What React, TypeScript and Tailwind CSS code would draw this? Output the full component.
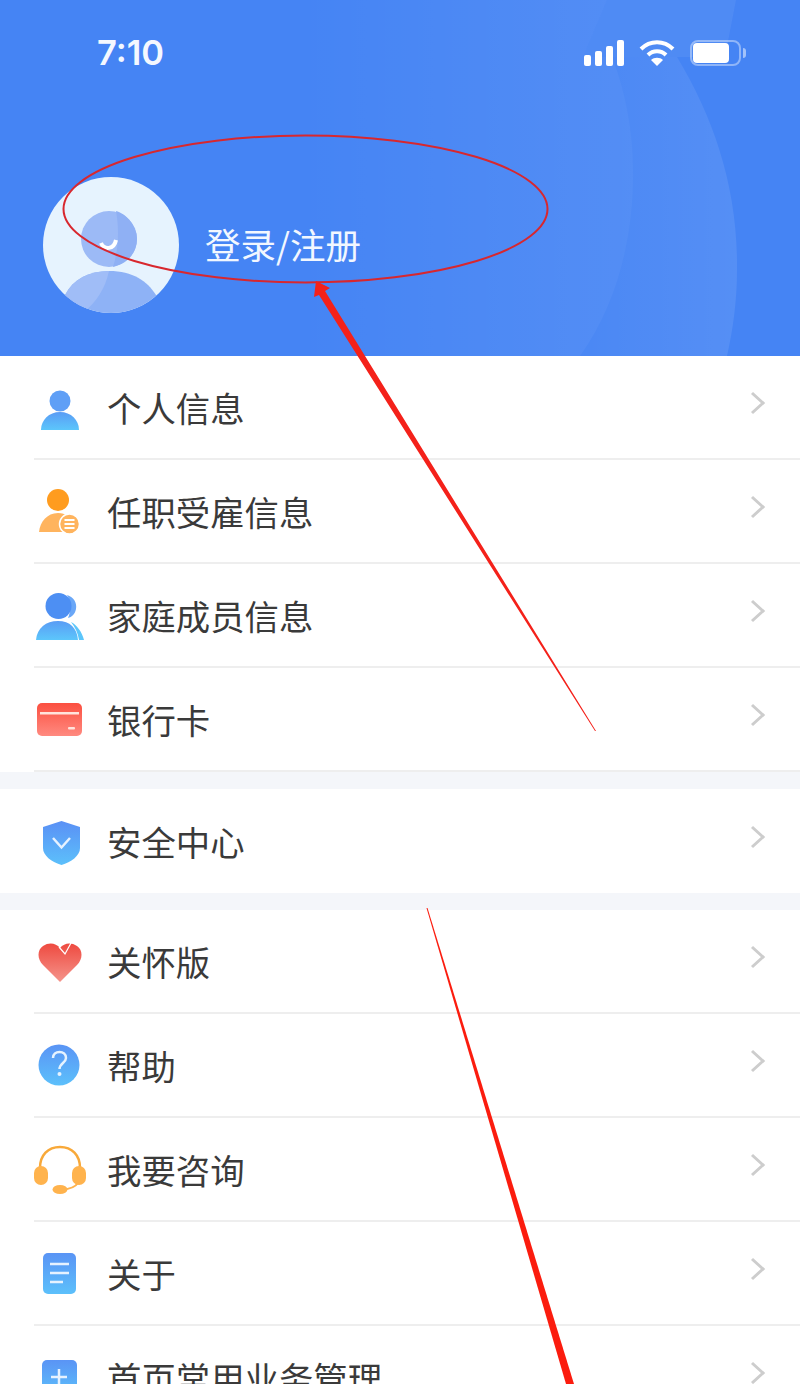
const cjk = "font-['Noto_Sans_CJK_SC','Noto_Sans',sans-serif]";

const PersonIcon = () => (
	<svg width="50" height="50" viewBox="0 0 50 50">
		<defs>
			<linearGradient id="p1" x1="0" y1="0" x2="0" y2="1">
				<stop offset="0" stopColor="#5a9cf5" />
				<stop offset="1" stopColor="#5cc6fb" />
			</linearGradient>
		</defs>
		<circle cx="26" cy="19" r="10.500" fill="#5f9ff6" />
		<path d="M7 48C7 38 15 30 26 30C37 30 45 38 45 48Z" fill="url(#p1)" />
	</svg>
);

const JobIcon = () => (
	<svg width="50" height="50" viewBox="0 0 50 50">
		<circle cx="24" cy="14" r="11" fill="#ff9c1f" />
		<path d="M5 46C6 36 13 27 24 27C28 27 31 28 33 30L29 46Z" fill="#ffb45e" />
		<circle cx="35.500" cy="38" r="10" fill="#ffb45e" stroke="#fff" strokeWidth="1.500" />
		<path d="M30.500 34H40.500M30.500 38H40.500M30.500 42H40.500" stroke="#fff" strokeWidth="2" />
	</svg>
);

const FamilyIcon = () => (
	<svg width="50" height="50" viewBox="0 0 50 50">
		<defs>
			<linearGradient id="f1" x1="0" y1="0" x2="0" y2="1">
				<stop offset="0" stopColor="#5a9cf5" />
				<stop offset="1" stopColor="#5cc6fb" />
			</linearGradient>
		</defs>
		<path d="M33 5C40 7 43 13 42 19C41 24 38 27 34 28C37 22 37 12 33 5Z" fill="#6aa7f7" />
		<circle cx="24.500" cy="16" r="13" fill="#4d8ff3" />
		<path d="M2 50C3 38 12 31 24 31C36 31 43 38 44 50Z" fill="url(#f1)" />
		<path d="M37 32C43 35 48 42 50 50H45C44 43 41 37 37 32Z" fill="#5cc6fb" />
	</svg>
);

const CardIcon = () => (
	<svg width="50" height="50" viewBox="0 0 50 50">
		<defs>
			<linearGradient id="c1" x1="0" y1="0" x2="0" y2="1">
				<stop offset="0" stopColor="#fb4f40" />
				<stop offset="1" stopColor="#ff8a80" />
			</linearGradient>
		</defs>
		<rect x="3" y="9" width="45" height="33" rx="5" fill="url(#c1)" />
		<rect x="6" y="18" width="39" height="2.500" fill="#ffe3dc" />
		<rect x="34" y="33" width="7" height="2.500" rx="1" fill="#ffe3dc" />
	</svg>
);

const ShieldIcon = () => (
	<svg width="50" height="50" viewBox="0 0 50 50">
		<defs>
			<linearGradient id="s1" x1="0" y1="0" x2="0" y2="1">
				<stop offset="0" stopColor="#5a90f5" />
				<stop offset="1" stopColor="#5cc0fb" />
			</linearGradient>
		</defs>
		<path d="M27.500 5L46 11V32C46 40 37 46 27.500 49C18 46 9 40 9 32V11Z" fill="url(#s1)" />
		<path d="M19 22L27.500 31.500L36 22" fill="none" stroke="#e6f2ff" strokeWidth="2.500" />
	</svg>
);

const HeartIcon = () => (
	<svg width="50" height="50" viewBox="0 0 50 50">
		<defs>
			<linearGradient id="h1" x1="0" y1="0" x2="0" y2="1">
				<stop offset="0" stopColor="#ee4a40" />
				<stop offset="1" stopColor="#f5948b" />
			</linearGradient>
		</defs>
		<path d="M26 46L9 29C3 23 3 14 9 10C15 6 22 7 26 12C30 7 37 6 43 10C49 14 49 23 43 29Z" fill="url(#h1)" />
		<path d="M25 11L31 18L37 7" fill="none" stroke="#fff" strokeWidth="1.200" />
	</svg>
);

const HelpIcon = () => (
	<svg width="50" height="50" viewBox="0 0 50 50">
		<defs>
			<linearGradient id="q1" x1="0" y1="0" x2="0" y2="1">
				<stop offset="0" stopColor="#5a94f5" />
				<stop offset="1" stopColor="#5cc0fb" />
			</linearGradient>
		</defs>
		<circle cx="25" cy="25" r="20.500" fill="url(#q1)" />
		<path d="M19 18C19 14 22 12 25.500 12C29 12 32 14 32 18C32 23 25.500 23 25.500 29" fill="none" stroke="#e6f3ff" strokeWidth="2.500" />
		<circle cx="25.500" cy="34" r="2" fill="#e6f3ff" />
	</svg>
);

const HeadsetIcon = () => (
	<svg width="52" height="50" viewBox="0 0 52 50">
		<path d="M6 24C6 11 14 3 26 3C38 3 46 11 46 24" fill="none" stroke="#f8a93a" strokeWidth="2.500" />
		<rect x="0" y="22" width="14" height="19" rx="7" fill="#ffb34d" />
		<rect x="38" y="22" width="14" height="19" rx="7" fill="#ffb34d" />
		<path d="M44 39C42 42 36 45 28 46" fill="none" stroke="#ffb34d" strokeWidth="2" />
		<ellipse cx="26" cy="45.500" rx="7.500" ry="4.500" fill="#ffb34d" />
	</svg>
);

const AboutIcon = () => (
	<svg width="50" height="50" viewBox="0 0 50 50">
		<defs>
			<linearGradient id="a1" x1="0" y1="0" x2="0" y2="1">
				<stop offset="0" stopColor="#5a94f5" />
				<stop offset="1" stopColor="#5cc0fb" />
			</linearGradient>
		</defs>
		<rect x="9" y="5" width="33" height="41" rx="5" fill="url(#a1)" />
		<path d="M16 16H35M16 25H35M16 34H29" stroke="#e6f2ff" strokeWidth="2.500" />
	</svg>
);

const PlusIcon = () => (
	<svg width="50" height="50" viewBox="0 0 50 50">
		<defs>
			<linearGradient id="m1" x1="0" y1="0" x2="0" y2="1">
				<stop offset="0" stopColor="#5a94f5" />
				<stop offset="1" stopColor="#5cc0fb" />
			</linearGradient>
		</defs>
		<rect x="8" y="8" width="35" height="35" rx="5" fill="url(#m1)" />
		<path d="M17 25H33M25 17V33" stroke="#e6f2ff" strokeWidth="2.500" />
	</svg>
);

const Chevron = () => (
	<svg width="16" height="24" viewBox="0 0 16 24" className="mb-[8px]">
		<path d="M2 2L13 12L2 22" fill="none" stroke="#cdcdcd" strokeWidth="3" />
	</svg>
);

const Row = ({ icon, label, last }: { icon: React.ReactNode; label: string; last?: boolean }) => (
	<div className="pl-[34px] bg-white">
		<div className={`h-[104px] flex items-center pr-[34px] ${last ? "" : "border-b-2 border-[#eeeeee]"}`}>
			<div className="w-[52px] h-[50px] shrink-0">{icon}</div>
			<div className={`ml-[21px] flex-1 text-[34.4px] leading-none text-[#3a3a3a] ${cjk}`}>{label}</div>
			<Chevron />
		</div>
	</div>
);

const Gap = () => <div className="h-[17px] bg-[#f4f6fa]" />;

const HeaderWaves = () => (
	<svg className="absolute inset-0" width="800" height="356" viewBox="0 0 800 356">
		<defs>
			<linearGradient id="w1" x1="0" y1="0" x2="1" y2="0">
				<stop offset="0" stopColor="#fff" stopOpacity="0" />
				<stop offset="1" stopColor="#fff" stopOpacity="0.08" />
			</linearGradient>
			<linearGradient id="w2" x1="0" y1="0" x2="1" y2="0">
				<stop offset="0" stopColor="#fff" stopOpacity="0.03" />
				<stop offset="1" stopColor="#fff" stopOpacity="0.09" />
			</linearGradient>
		</defs>
		<path d="M607 0H736L725 57H583Z" fill="#fff" fillOpacity="0.06" />
		<path d="M300 0H607L583 57H612C625 90 633 130 633 170C634 230 620 300 580 356H300Z" fill="url(#w1)" />
		<path d="M677 57C715 120 738 190 737 270C737 300 733 330 727 356H580C620 300 634 230 633 170C633 130 625 90 612 57Z" fill="url(#w2)" />
	</svg>
);

const Avatar = () => (
	<svg width="136" height="136" viewBox="0 0 136 136" className="shrink-0">
		<defs>
			<clipPath id="av">
				<circle cx="68" cy="68" r="68" />
			</clipPath>
		</defs>
		<circle cx="68" cy="68" r="68" fill="#e6f3fe" />
		<circle cx="66" cy="62" r="28" fill="#9cbaf6" />
		<path d="M73 34C82 36 94 48 94 62C94 74 86 86 70 90C76 72 76 50 73 34Z" fill="#8fb0f4" />
		<path d="M58 66C61 73 71 73 73 63" fill="none" stroke="#fff" strokeWidth="4" />
		<g clipPath="url(#av)">
			<path d="M22 118C30 102 46 94 66 94C90 94 104 104 113 118L113 136H22Z" fill="#8eb2f6" />
			<path d="M22 118C30 102 46 94 66 94C62 112 54 124 40 136H22Z" fill="#a0bdf7" />
		</g>
	</svg>
);

const StatusIcons = () => (
	<div className="flex items-center mr-[54px]">
		<svg width="40" height="26" viewBox="0 0 40 26" fill="#fff">
			<rect x="0" y="15" width="7" height="11" rx="2" />
			<rect x="11" y="11" width="7" height="15" rx="2" />
			<rect x="22" y="6" width="7" height="20" rx="2" />
			<rect x="33" y="0" width="7" height="26" rx="2" />
		</svg>
		<svg width="36" height="26" viewBox="0 0 36 26" className="ml-[15px]" fill="none" stroke="#fff" strokeWidth="4">
			<path d="M2 9C11 0 25 0 34 9" />
			<path d="M9 15C14 10 22 10 27 15" />
			<path d="M18 26L12 20C15 17 21 17 24 20Z" fill="#fff" stroke="none" />
		</svg>
		<div className="ml-[15px] w-[51px] h-[26px] rounded-[8px] border-2 border-white/40 flex items-center pl-[1px]">
			<div className="w-[36px] h-[20px] rounded-[4px] bg-white" />
		</div>
		<div className="ml-[2px] w-[3px] h-[10px] rounded-r-full bg-white/50" />
	</div>
);

const Annotations = () => (
	<svg className="absolute inset-0 pointer-events-none" width="800" height="1384" viewBox="0 0 800 1384">
		<ellipse cx="305.500" cy="209" rx="242" ry="73.500" fill="none" stroke="#d8272e" strokeWidth="2" />
		<path d="M316 281L330 288L325 291L596 731L595 731L319 295L314 297Z" fill="#f4211a" />
		<path d="M426.500 908L427.500 908L574 1384H566Z" fill="#fb1c0e" />
	</svg>
);

export default function App() {
	return (
		<div className="relative w-[800px] h-[1384px] overflow-hidden bg-white">
			<div className="relative h-[356px] bg-[#4584f4] overflow-hidden">
				<HeaderWaves />
				<div className="relative flex flex-col">
					<div className="h-[106px] pt-[40px] flex items-start justify-between">
						<div className="ml-[97px] text-[34.5px] leading-[26px] font-semibold text-[#f4f8ff] font-['Inter',sans-serif]">7:10</div>
						<StatusIcons />
					</div>
					<div className="mt-[71px] pl-[43px] flex items-center">
						<Avatar />
						<div className={`ml-[26px] pb-[3px] text-[35.5px] leading-none text-[#f2f7ff] ${cjk}`}>登录/注册</div>
					</div>
				</div>
			</div>
			<Row icon={<PersonIcon />} label="个人信息" />
			<Row icon={<JobIcon />} label="任职受雇信息" />
			<Row icon={<FamilyIcon />} label="家庭成员信息" />
			<Row icon={<CardIcon />} label="银行卡" />
			<Gap />
			<Row icon={<ShieldIcon />} label="安全中心" last />
			<Gap />
			<Row icon={<HeartIcon />} label="关怀版" />
			<Row icon={<HelpIcon />} label="帮助" />
			<Row icon={<HeadsetIcon />} label="我要咨询" />
			<Row icon={<AboutIcon />} label="关于" />
			<Row icon={<PlusIcon />} label="首页常用业务管理" />
			<Annotations />
		</div>
	);
}
